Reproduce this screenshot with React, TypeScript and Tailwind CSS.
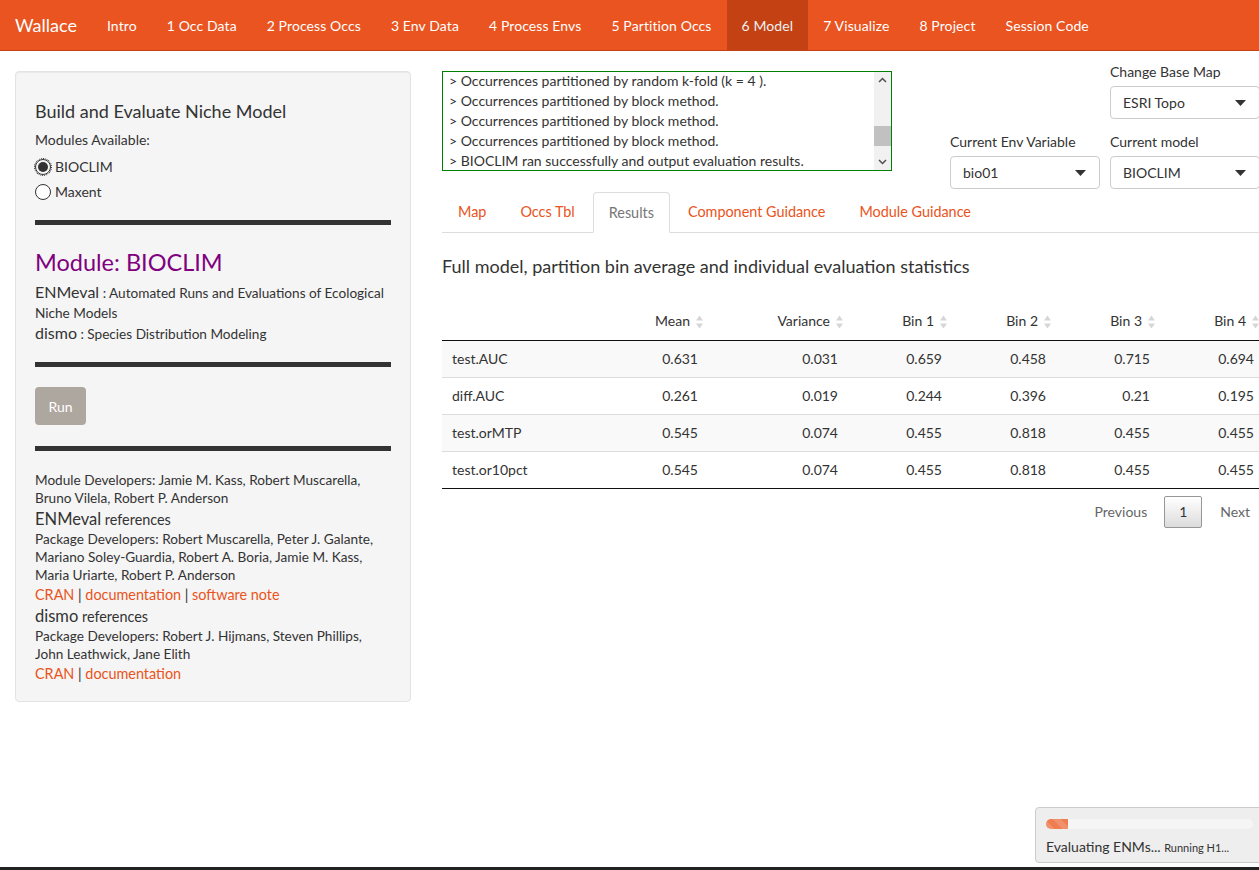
import React from "react";

const navItems = [
  "Intro",
  "1 Occ Data",
  "2 Process Occs",
  "3 Env Data",
  "4 Process Envs",
  "5 Partition Occs",
  "6 Model",
  "7 Visualize",
  "8 Project",
  "Session Code",
];

const logLines = [
  "> Occurrences partitioned by random k-fold (k = 4 ).",
  "> Occurrences partitioned by block method.",
  "> Occurrences partitioned by block method.",
  "> Occurrences partitioned by block method.",
  "> BIOCLIM ran successfully and output evaluation results.",
];

const headers = ["Mean", "Variance", "Bin 1", "Bin 2", "Bin 3", "Bin 4"];
const colWidths = ["w-[108px]", "w-[140px]", "w-[104px]", "w-[104px]", "w-[104px]", "w-[104px]"];

const rows: [string, string[]][] = [
  ["test.AUC", ["0.631", "0.031", "0.659", "0.458", "0.715", "0.694"]],
  ["diff.AUC", ["0.261", "0.019", "0.244", "0.396", "0.21", "0.195"]],
  ["test.orMTP", ["0.545", "0.074", "0.455", "0.818", "0.455", "0.455"]],
  ["test.or10pct", ["0.545", "0.074", "0.455", "0.818", "0.455", "0.455"]],
];

function Caret() {
  return (
    <svg width="11" height="6" viewBox="0 0 11 6" className="fill-[#333]">
      <path d="M0 0h11L5.5 6z" />
    </svg>
  );
}

function Select({ value, w }: { value: string; w: string }) {
  return (
    <div
      className={`flex h-[33px] ${w} items-center justify-between rounded-[4px] border border-[#ccc] bg-white pl-[12px] pr-[13px] text-[14px] text-[#333]`}
    >
      <span>{value}</span>
      <Caret />
    </div>
  );
}

function SortIcon() {
  return (
    <svg width="7" height="13" viewBox="0 0 7 13" className="absolute right-[5px] top-1/2 -translate-y-1/2 fill-[#d6d6d6]">
      <path d="M3.5 0L7 5H0z" />
      <path d="M3.5 13L7 8H0z" />
    </svg>
  );
}

export default function App() {
  return (
    <div
      className="relative h-[870px] w-[1259px] overflow-hidden bg-white text-[14px] text-[#333]"
      style={{ fontFamily: "Lato, 'Noto Sans', sans-serif" }}
    >
      {/* navbar */}
      <nav className="flex h-[51px] border-b border-[#c34113] bg-[#e95420] text-white">
        <div className="flex items-center px-[15px] text-[18px]">Wallace</div>
        {navItems.map((item) => (
          <div
            key={item}
            className={`flex items-center px-[15px] text-[14px] tracking-[0.1px] ${
              item === "6 Model" ? "bg-[#c34113] text-[#f0f0f0]" : ""
            }`}
          >
            {item}
          </div>
        ))}
      </nav>

      <div className="flex pt-[20px]">
        {/* sidebar */}
        <aside className="ml-[15px] w-[396px] shrink-0 self-start rounded-[4px] border border-[#e3e3e3] bg-[#f5f5f5] px-[19px] pb-[17px] pt-[27px] shadow-[inset_0_1px_1px_rgba(0,0,0,0.05)]">
          <h4 className="text-[18px] leading-[24px] text-[#333]">Build and Evaluate Niche Model</h4>
          <p className="mt-[7px] text-[14px] leading-[20px]">Modules Available:</p>
          <div className="mt-[7px] flex flex-col gap-[5px]">
            <label className="flex items-center gap-[4px] leading-[20px]">
              <span className="flex h-[16px] w-[16px] items-center justify-center rounded-full border border-[#333] outline-1 outline-dotted outline-[#222]">
                <span className="h-[10px] w-[10px] rounded-full bg-[#333]" />
              </span>
              BIOCLIM
            </label>
            <label className="flex items-center gap-[4px] leading-[20px]">
              <span className="h-[16px] w-[16px] rounded-full border border-[#333] bg-white" />
              Maxent
            </label>
          </div>
          <div className="mt-[18px] mb-[20px] h-[5px] bg-[#333]" />
          <h3 className="mt-[22px] text-[23.5px] leading-[30px] text-[#800080]">Module: BIOCLIM</h3>
          <div className="mt-[5px] text-[13.6px] leading-[20px]">
            <span className="text-[16px] leading-[20px]">ENMeval</span> : Automated Runs and Evaluations of Ecological
            Niche Models
          </div>
          <div className="text-[13.6px] leading-[20px]">
            <span className="text-[16px] leading-[20px]">dismo</span> : Species Distribution Modeling
          </div>
          <div className="mt-[18px] mb-[20px] h-[5px] bg-[#333]" />
          <button className="h-[38px] w-[51px] rounded-[4px] bg-[#aea79f] text-[14px] text-white">Run</button>
          <div className="mt-[21px] mb-[20px] h-[5px] bg-[#333]" />
          <div className="text-[13.6px] leading-[18px]">
            Module Developers: Jamie M. Kass, Robert Muscarella, Bruno Vilela, Robert P. Anderson
          </div>
          <div className="mt-[2px] text-[14.4px] leading-[20px]">
            <span className="text-[16.5px]">ENMeval</span> references
          </div>
          <div className="text-[13.6px] leading-[18px]">
            Package Developers: Robert Muscarella, Peter J. Galante, Mariano Soley-Guardia, Robert A. Boria, Jamie M.
            Kass, Maria Uriarte, Robert P. Anderson
          </div>
          <div className="mt-[1px] text-[14.4px] leading-[20px]">
            <span className="text-[#e95420]">CRAN</span> | <span className="text-[#e95420]">documentation</span> |{" "}
            <span className="text-[#e95420]">software note</span>
          </div>
          <div className="mt-[1px] text-[14.4px] leading-[20px]">
            <span className="text-[16.5px]">dismo</span> references
          </div>
          <div className="text-[13.6px] leading-[18px]">
            Package Developers: Robert J. Hijmans, Steven Phillips, John Leathwick, Jane Elith
          </div>
          <div className="mt-[1px] text-[14.4px] leading-[20px]">
            <span className="text-[#e95420]">CRAN</span> | <span className="text-[#e95420]">documentation</span>
          </div>
        </aside>

        {/* main */}
        <main className="ml-[31px] w-[830px] shrink-0">
          <div className="flex h-[121px]">
            <div className="flex h-[100px] w-[450px] border border-[#008000] bg-white">
              <div className="-mt-[1px] flex-1 overflow-hidden pl-[6px] text-[14px] leading-[20px]">
                {logLines.map((l, i) => (
                  <div key={i} className="whitespace-nowrap">
                    {l}
                  </div>
                ))}
              </div>
              <div className="flex w-[17px] flex-col items-center bg-[#f1f1f1]">
                <svg width="17" height="17" viewBox="0 0 17 17" className="stroke-[#505050]" fill="none">
                  <path d="M5 10l3.5-3.5L12 10" strokeWidth="1.5" />
                </svg>
                <div className="mt-[37px] h-[20px] w-[17px] bg-[#c1c1c1]" />
                <div className="flex-1" />
                <svg width="17" height="17" viewBox="0 0 17 17" className="stroke-[#505050]" fill="none">
                  <path d="M5 7l3.5 3.5L12 7" strokeWidth="1.5" />
                </svg>
              </div>
            </div>
            <div className="ml-[58px] flex flex-col">
              <div className="flex justify-end">
                <div>
                  <div className="mb-[4px] mt-[-9px] leading-[20px]">Change Base Map</div>
                  <Select value="ESRI Topo" w="w-[150px]" />
                </div>
              </div>
              <div className="mt-[13px] flex gap-[10px]">
                <div>
                  <div className="mb-[4px] leading-[20px]">Current Env Variable</div>
                  <Select value="bio01" w="w-[150px]" />
                </div>
                <div>
                  <div className="mb-[4px] leading-[20px]">Current model</div>
                  <Select value="BIOCLIM" w="w-[150px]" />
                </div>
              </div>
            </div>
          </div>

          {/* tabs */}
          <div className="flex h-[41px] border-b border-[#ddd] text-[14.4px]">
            {["Map", "Occs Tbl", "Results", "Component Guidance", "Module Guidance"].map((t) =>
              t === "Results" ? (
                <div
                  key={t}
                  className="-mb-px mr-[2px] flex items-center rounded-t-[4px] border border-b-transparent border-[#ddd] bg-white px-[15px] text-[#777]"
                >
                  {t}
                </div>
              ) : (
                <div key={t} className="mr-[2px] flex items-center px-[16px] text-[#e95420]">
                  {t}
                </div>
              )
            )}
          </div>

          <h4 className="mt-[21px] text-[18px] leading-[24px]">
            Full model, partition bin average and individual evaluation statistics
          </h4>

          {/* table */}
          <table className="mt-[26px] border-collapse text-[14px]">
            <thead>
              <tr className="h-[36px] border-b border-[#111]">
                <th className="w-[158px]" />
                {headers.map((h, i) => (
                  <th key={h} className={`relative ${colWidths[i]} pb-[3px] pr-[18px] text-right font-normal`}>
                    {h}
                    <SortIcon />
                  </th>
                ))}
              </tr>
            </thead>
            <tbody>
              {rows.map(([name, vals], r) => (
                <tr
                  key={name}
                  className={`h-[37px] ${r < 3 ? "border-b border-[#ddd]" : "border-b border-[#111]"} ${
                    r % 2 === 0 ? "bg-[#f9f9f9]" : "bg-white"
                  }`}
                >
                  <td className="pl-[10px] text-left">{name}</td>
                  {vals.map((v, i) => (
                    <td key={i} className="pr-[10px] text-right">
                      {v}
                    </td>
                  ))}
                </tr>
              ))}
            </tbody>
          </table>

          {/* pagination */}
          <div className="mt-[7px] flex w-[808px] items-center justify-end text-[14px] text-[#666]">
            <span className="px-[13px]">Previous</span>
            <span className="mx-[4px] flex h-[32px] w-[38px] items-center justify-center rounded-[2px] border border-[#979797] bg-gradient-to-b from-white to-[#dcdcdc] text-[#333]">
              1
            </span>
            <span className="pl-[14px]">Next</span>
          </div>
        </main>
      </div>

      {/* progress notification */}
      <div className="absolute left-[1035px] top-[807px] h-[56px] w-[240px] rounded-[4px] border border-[#ccc] bg-[#eee] px-[10px] pt-[11px]">
        <div className="h-[10px] w-[207px] overflow-hidden rounded-[5px] bg-[#f5f5f5]">
          <div className="h-full w-[22px] bg-[#ef7d52] bg-[linear-gradient(45deg,rgba(255,255,255,0.15)_25%,transparent_25%,transparent_50%,rgba(255,255,255,0.15)_50%,rgba(255,255,255,0.15)_75%,transparent_75%)]" />
        </div>
        <div className="mt-[8px] whitespace-nowrap text-[14px] leading-[20px] text-[#333]">
          Evaluating ENMs... <span className="text-[11px]">Running H1...</span>
        </div>
      </div>

      <div className="absolute bottom-0 left-0 h-[3px] w-full bg-[#222]" />
    </div>
  );
}
